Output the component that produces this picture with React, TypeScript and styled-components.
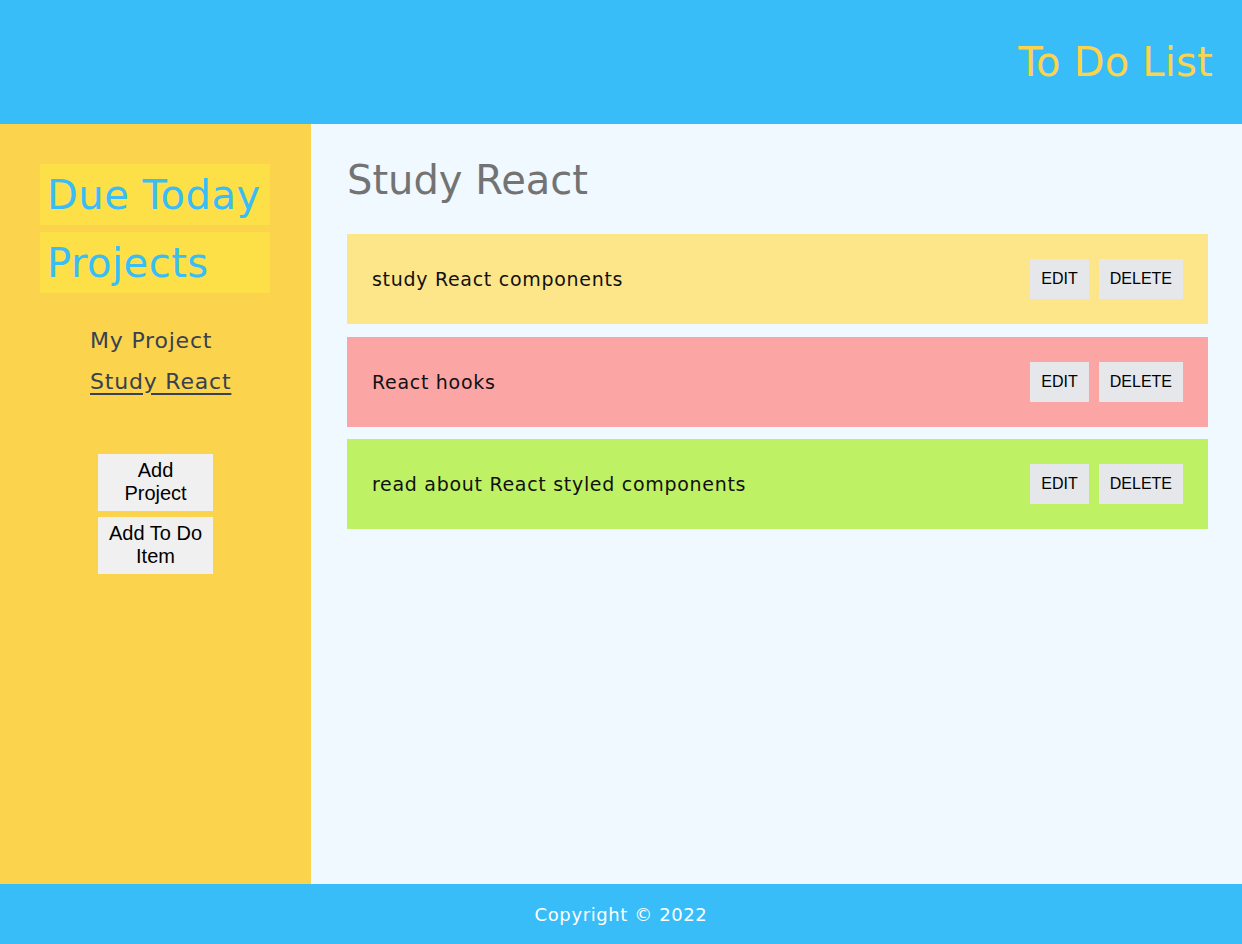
import React from "react";
import styled, { createGlobalStyle } from "styled-components";

const GlobalStyle = createGlobalStyle`
  html, body { margin: 0; padding: 0; }
  body { font-family: "DejaVu Sans", "Noto Sans", sans-serif; }
  * { box-sizing: border-box; }
`;

const Page = styled.div`
  display: grid;
  grid-template-rows: 124px 760px 60px;
  height: 944px;
  width: 1242px;
`;

const Header = styled.header`
  background: #38bdf8;
  display: flex;
  align-items: center;
  justify-content: flex-end;
  padding-right: 29px;
`;

const Title = styled.h1`
  margin: 0;
  font-size: 40px;
  font-weight: 400;
  color: #fcd34d;
  letter-spacing: 0.2px;
`;

const Body = styled.div`
  display: grid;
  grid-template-columns: 311px 1fr;
`;

const Sidebar = styled.aside`
  background: #fcd34d;
  padding: 40px 40px;
  display: flex;
  flex-direction: column;
`;

const NavBox = styled.div`
  background: #fde047;
  width: 230px;
  height: 61px;
  margin-bottom: 7px;
  display: flex;
  align-items: center;
  padding-left: 7px;
  font-size: 40px;
  color: #38bdf8;
  letter-spacing: 0.5px;
`;

const ProjectList = styled.ul`
  list-style: none;
  margin: 25px 0 0;
  padding: 0 0 0 50px;
  display: flex;
  flex-direction: column;
  gap: 9px;
`;

const ProjectLink = styled.li<{ $active?: boolean }>`
  font-size: 22px;
  line-height: 32px;
  color: #374151;
  text-decoration: ${(p) => (p.$active ? "underline" : "none")};
  text-underline-offset: 4px;
  letter-spacing: 0.8px;
`;

const SideButtons = styled.div`
  margin-top: 56px;
  display: flex;
  flex-direction: column;
  align-items: center;
  gap: 6px;
`;

const SideButton = styled.button`
  width: 115px;
  border: none;
  background: #f0f0f0;
  font-family: "Liberation Sans", Arial, sans-serif;
  font-size: 20px;
  line-height: 23px;
  color: #000;
  padding: 5px 8px 6px;
`;

const Main = styled.main`
  background: #f0f9ff;
  padding: 27px 34px 0 36px;
  display: flex;
  flex-direction: column;
`;

const Heading = styled.h2`
  margin: 0 0 25px;
  font-size: 40px;
  font-weight: 400;
  color: #737373;
  line-height: 58px;
`;

const Items = styled.div`
  display: flex;
  flex-direction: column;
  gap: 12.5px;
`;

const Item = styled.div<{ $bg: string }>`
  background: ${(p) => p.$bg};
  height: 90px;
  display: flex;
  align-items: center;
  justify-content: space-between;
  padding: 0 25px 0 25px;
`;

const ItemText = styled.span`
  font-size: 19px;
  color: #111;
  letter-spacing: 0.7px;
`;

const Actions = styled.div`
  display: flex;
  gap: 10px;
`;

const ActionButton = styled.button`
  border: none;
  background: #e5e7eb;
  font-family: "Liberation Sans", Arial, sans-serif;
  font-size: 16px;
  color: #000;
  height: 40px;
  padding: 0 11px;
`;

const Footer = styled.footer`
  background: #38bdf8;
  display: flex;
  align-items: center;
  justify-content: center;
  color: #fff;
  font-size: 18px;
  letter-spacing: 0.6px;
`;

const items = [
  { text: "study React components", bg: "#fde68a" },
  { text: "React hooks", bg: "#fca5a5" },
  { text: "read about React styled components", bg: "#bef264" },
];

export default function App() {
  return (
    <>
      <GlobalStyle />
      <Page>
        <Header>
          <Title>To Do List</Title>
        </Header>
        <Body>
          <Sidebar>
            <NavBox>Due Today</NavBox>
            <NavBox>Projects</NavBox>
            <ProjectList>
              <ProjectLink>My Project</ProjectLink>
              <ProjectLink $active>Study React</ProjectLink>
            </ProjectList>
            <SideButtons>
              <SideButton>Add Project</SideButton>
              <SideButton>Add To Do Item</SideButton>
            </SideButtons>
          </Sidebar>
          <Main>
            <Heading>Study React</Heading>
            <Items>
              {items.map((it) => (
                <Item key={it.text} $bg={it.bg}>
                  <ItemText>{it.text}</ItemText>
                  <Actions>
                    <ActionButton>EDIT</ActionButton>
                    <ActionButton>DELETE</ActionButton>
                  </Actions>
                </Item>
              ))}
            </Items>
          </Main>
        </Body>
        <Footer>Copyright © 2022</Footer>
      </Page>
    </>
  );
}
